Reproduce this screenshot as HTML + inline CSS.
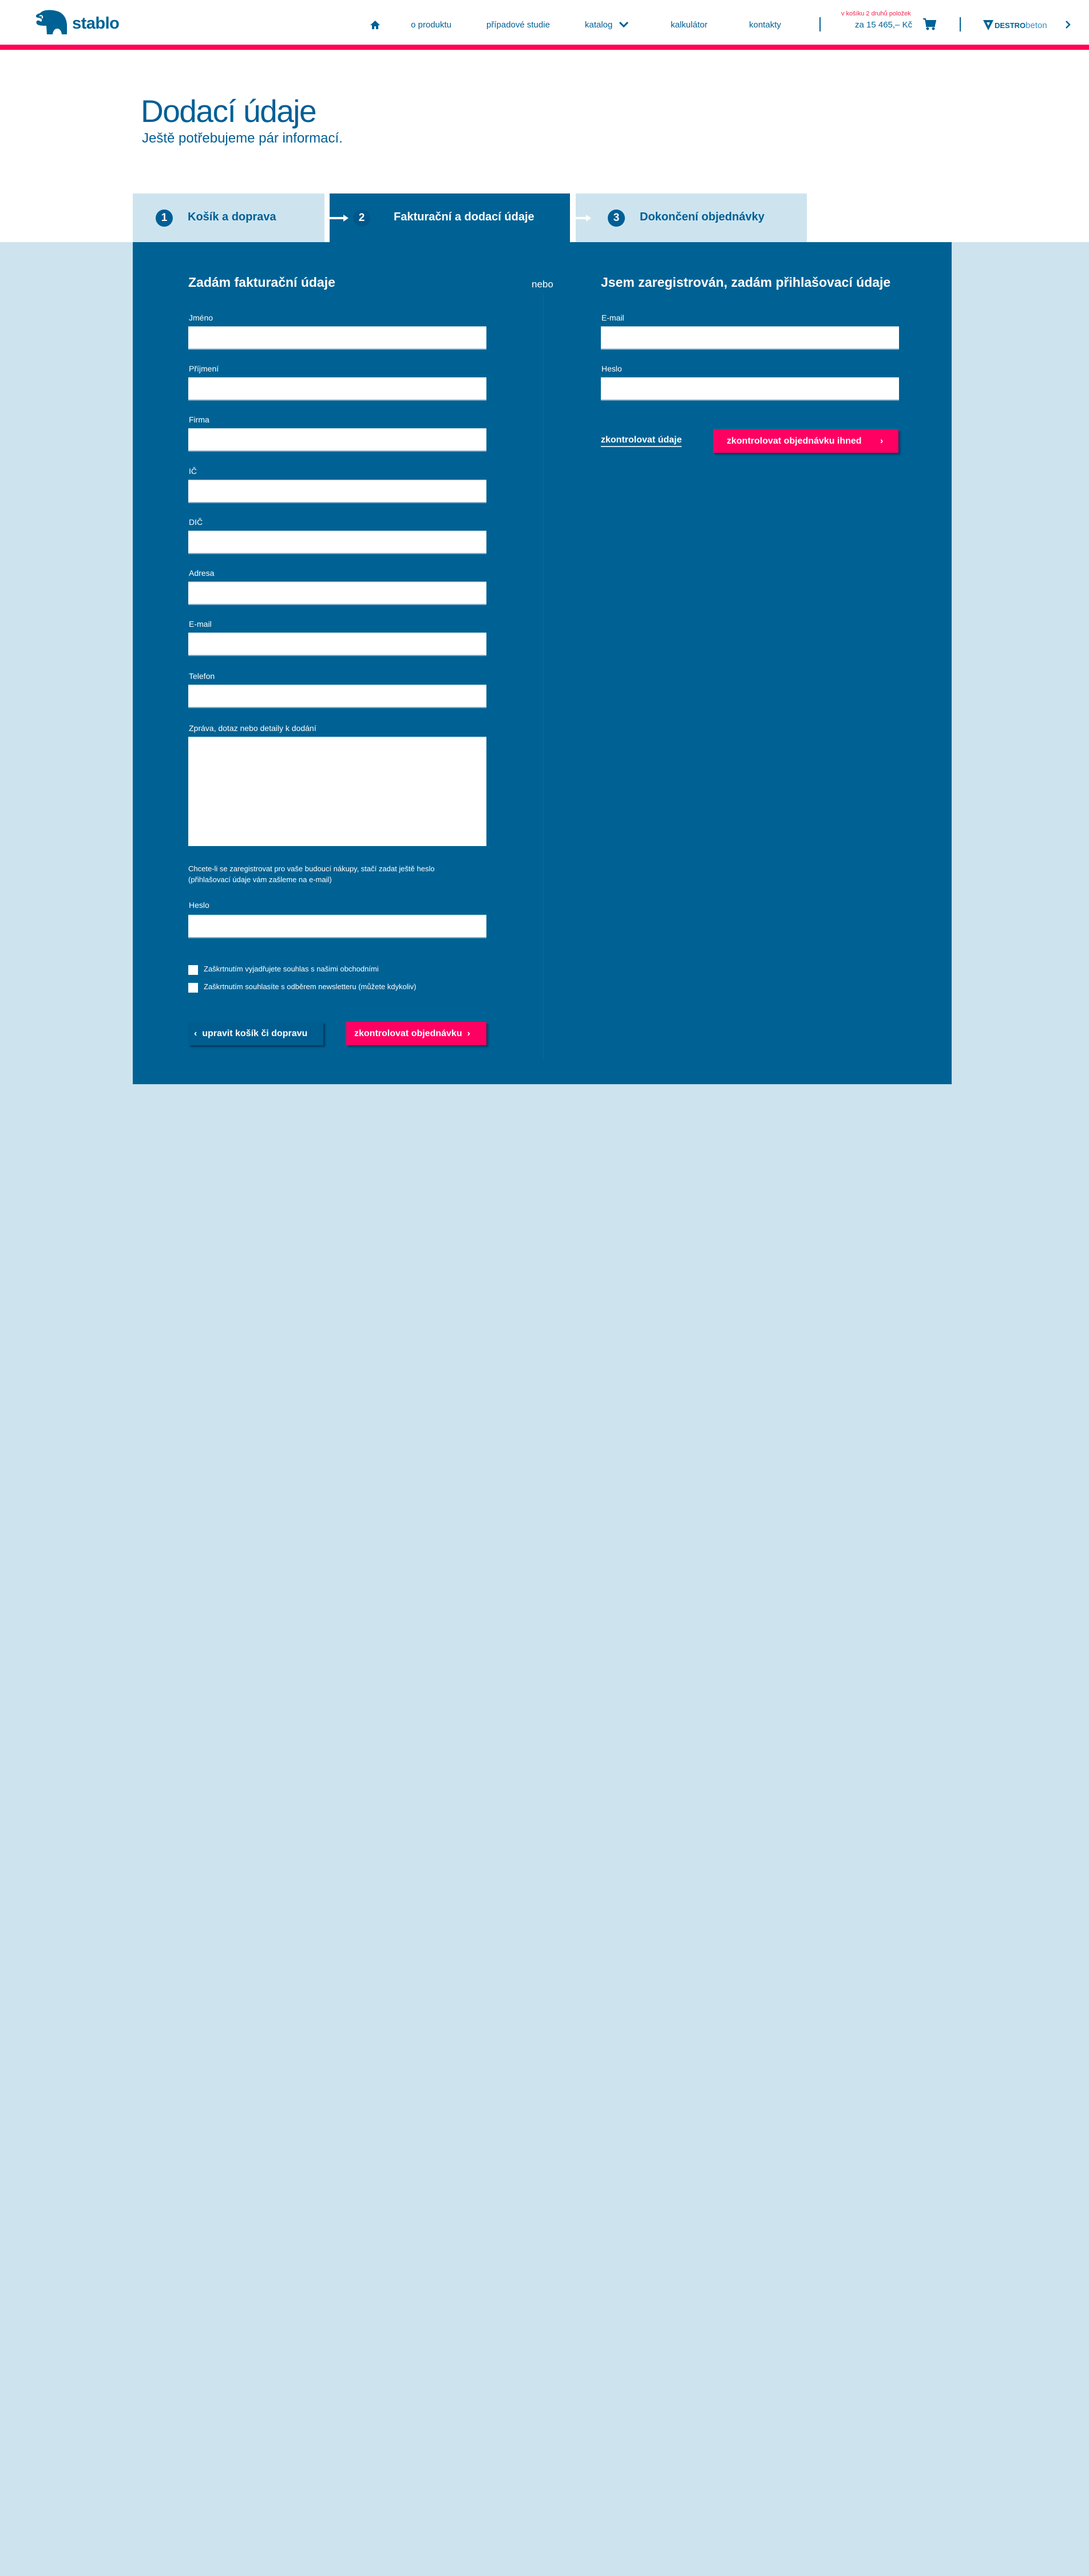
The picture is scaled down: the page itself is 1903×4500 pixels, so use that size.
<!DOCTYPE html>
<html><head><meta charset="utf-8"><style>
*{margin:0;padding:0;box-sizing:border-box}
body{width:1903px;height:4500px;background:#cde3ee;font-family:"Liberation Sans",sans-serif;position:relative;overflow:hidden}
.a{position:absolute}
.top{left:0;top:0;width:1903px;height:423px;background:#fff}
.pink{left:0;top:78px;width:1903px;height:9px;background:#ff0058}
.nav{font-size:15px;color:#005f95;top:35px;white-space:nowrap}
.panel{left:232px;top:423px;width:1431px;height:1471px;background:#006294}
.tab{top:338px;height:85px;background:#cde4ef;color:#005f95;font-size:20px;font-weight:bold}
.num{position:absolute;width:30px;height:30px;border-radius:50%;background:#005f95;color:#fff;font-size:19px;text-align:center;line-height:30px;top:28px}
.lbl{color:#fff;font-size:14px;left:330px}
.in{background:#fff;height:41px;width:521px;border-top:2px solid #dfe8ee;border-bottom:2px solid #7fa9c6}
.h{color:#fff;font-size:23px;font-weight:bold;top:480px}
.btn{height:41px;color:#fff;font-size:16px;font-weight:bold;line-height:41px;box-shadow:3px 3px 3px rgba(0,30,60,.6)}
.cb{width:17px;height:17px;background:#fff;left:329px}
.ct{color:#fff;font-size:13px;left:356px}
</style></head><body>
<div class="a top"></div>
<div class="a pink"></div>
<svg class="a" style="left:60px;top:17px" width="60" height="44" viewBox="0 0 60 44"><path d="M10 6 C16 -1 30 0 38 2 C48 4 56 12 57 26 L57 43 L48 43 C47 36 44 33 40 33 C36 33 33 36 32 43 L22 43 L21 28 C14 28 6 28 4 24 C2 20 6 17 10 20 C12 22 15 19 12 16 C9 13 4 15 3 12 C2 9 6 7 10 6 Z" fill="#006294"/><path d="M9 11 C13 9 16 12 13 15" stroke="#fff" stroke-width="2" fill="none"/></svg>
<div class="a" style="left:126px;top:25px;font-size:29px;font-weight:bold;color:#006294;letter-spacing:-0.5px">stablo</div>
<svg class="a" style="left:647px;top:36px" width="17" height="15" viewBox="0 0 17 15"><path d="M8.5 0 L17 8 L14 8 L14 15 L10 15 L10 10 L7 10 L7 15 L3 15 L3 8 L0 8 Z" fill="#005f95"/></svg>
<div class="a nav" style="left:718px">o produktu</div>
<div class="a nav" style="left:850px">případové studie</div>
<div class="a nav" style="left:1022px">katalog</div>
<svg class="a" style="left:1082px;top:38px" width="16" height="10"><path d="M1 1 L8 8 L15 1" stroke="#005f95" stroke-width="3" fill="none"/></svg>
<div class="a nav" style="left:1172px">kalkulátor</div>
<div class="a nav" style="left:1309px">kontakty</div>
<div class="a" style="left:1432px;top:30px;width:2px;height:25px;background:#006294"></div>
<div class="a" style="left:1470px;top:18px;font-size:11px;color:#f0244f;white-space:nowrap">v košíku 2 druhů položek</div>
<div class="a" style="left:1494px;top:35px;font-size:15px;color:#006294;white-space:nowrap">za 15 465,– Kč</div>
<svg class="a" style="left:1613px;top:32px" width="23" height="21" viewBox="0 0 23 21"><path d="M0 1 L4 1 L6 12 L20 12 L22 4 L5 4" fill="#006294" stroke="#006294" stroke-width="2"/><rect x="5" y="13" width="16" height="2" fill="#006294"/><circle cx="8" cy="18" r="2.5" fill="#006294"/><circle cx="18" cy="18" r="2.5" fill="#006294"/></svg>
<div class="a" style="left:1677px;top:30px;width:2px;height:25px;background:#006294"></div>
<svg class="a" style="left:1718px;top:35px" width="18" height="18" viewBox="0 0 18 18"><path d="M0 0 L18 0 L9 18 Z" fill="#006294"/><path d="M6 4 L12 4 L9 10 Z" fill="#fff"/></svg>
<div class="a" style="left:1738px;top:36px;font-size:13px;font-weight:bold;color:#006294">DESTRO<span style="font-weight:normal;font-size:15px;color:#3e8fbf">beton</span></div>
<svg class="a" style="left:1862px;top:36px" width="9" height="14"><path d="M1 1 L7 7 L1 13" stroke="#006294" stroke-width="2.5" fill="none"/></svg>

<div class="a" style="left:246px;top:162px;font-size:55px;color:#005f95;font-weight:300;letter-spacing:-1.5px">Dodací údaje</div>
<div class="a" style="left:248px;top:228px;font-size:24px;color:#005f95">Ještě potřebujeme pár informací.</div>

<div class="a tab" style="left:232px;width:335px"><div class="num" style="left:40px">1</div><div class="a" style="left:96px;top:30px">Košík a doprava</div></div>
<div class="a tab" style="left:576px;width:420px;height:85px;background:#006294;color:#fff"><div class="num" style="left:41px;background:#00588a">2</div><div class="a" style="left:112px;top:30px">Fakturační a dodací údaje</div></div>
<svg class="a" style="left:576px;top:374px" width="36" height="14"><path d="M0 5 L24 5 L24 1 L33 7 L24 13 L24 9 L0 9 Z" fill="#fff"/></svg>
<div class="a tab" style="left:1006px;width:404px"><div class="num" style="left:56px">3</div><div class="a" style="left:112px;top:30px">Dokončení objednávky</div></div>
<svg class="a" style="left:1000px;top:374px" width="36" height="14"><path d="M0 5 L24 5 L24 1 L33 7 L24 13 L24 9 L0 9 Z" fill="#fff"/></svg>

<div class="a panel"></div>
<div class="a" style="left:949px;top:514px;width:1px;height:1338px;background:#0a6aa0"></div>
<div class="a h" style="left:329px">Zadám fakturační údaje</div>
<div class="a" style="left:929px;top:487px;color:#fff;font-size:17px">nebo</div>
<div class="a h" style="left:1050px">Jsem zaregistrován, zadám přihlašovací údaje</div>

<div class="a lbl" style="top:547px">Jméno</div><div class="a in" style="left:329px;top:570px"></div>
<div class="a lbl" style="top:636px">Příjmení</div><div class="a in" style="left:329px;top:659px"></div>
<div class="a lbl" style="top:725px">Firma</div><div class="a in" style="left:329px;top:748px"></div>
<div class="a lbl" style="top:815px">IČ</div><div class="a in" style="left:329px;top:838px"></div>
<div class="a lbl" style="top:904px">DIČ</div><div class="a in" style="left:329px;top:927px"></div>
<div class="a lbl" style="top:993px">Adresa</div><div class="a in" style="left:329px;top:1016px"></div>
<div class="a lbl" style="top:1082px">E-mail</div><div class="a in" style="left:329px;top:1105px"></div>
<div class="a lbl" style="top:1173px">Telefon</div><div class="a in" style="left:329px;top:1196px"></div>
<div class="a lbl" style="top:1264px">Zpráva, dotaz nebo detaily k dodání</div><div class="a in" style="left:329px;top:1287px;height:191px;border-bottom:none"></div>
<div class="a" style="left:329px;top:1508px;color:#fff;font-size:13px;line-height:19px">Chcete-li se zaregistrovat pro vaše budoucí nákupy, stačí zadat ještě heslo<br>(přihlašovací údaje vám zašleme na e-mail)</div>
<div class="a lbl" style="top:1573px">Heslo</div><div class="a in" style="left:329px;top:1598px"></div>
<div class="a cb" style="top:1686px"></div><div class="a ct" style="top:1685px">Zaškrtnutím vyjadřujete souhlas s našimi obchodními</div>
<div class="a cb" style="top:1717px"></div><div class="a ct" style="top:1716px">Zaškrtnutím souhlasíte s odběrem newsletteru (můžete kdykoliv)</div>
<div class="a btn" style="left:329px;top:1785px;width:236px;background:#005d8f;padding-left:10px">&#x2039;&nbsp; upravit košík či dopravu</div>
<div class="a btn" style="left:605px;top:1785px;width:245px;background:#ff0062;padding-left:14px">zkontrolovat objednávku &nbsp;&#x203A;</div>

<div class="a lbl" style="left:1051px;top:547px">E-mail</div><div class="a in" style="left:1050px;top:570px"></div>
<div class="a lbl" style="left:1051px;top:636px">Heslo</div><div class="a in" style="left:1050px;top:659px"></div>
<div class="a" style="left:1050px;top:760px;color:#fff;font-size:16px;font-weight:bold;border-bottom:2px solid #cde3ee;padding-bottom:1px">zkontrolovat údaje</div>
<div class="a btn" style="left:1246px;top:750px;width:324px;background:#ff0062;padding-left:24px">zkontrolovat objednávku ihned <span style="margin-left:28px">&#x203A;</span></div>
</body></html>
